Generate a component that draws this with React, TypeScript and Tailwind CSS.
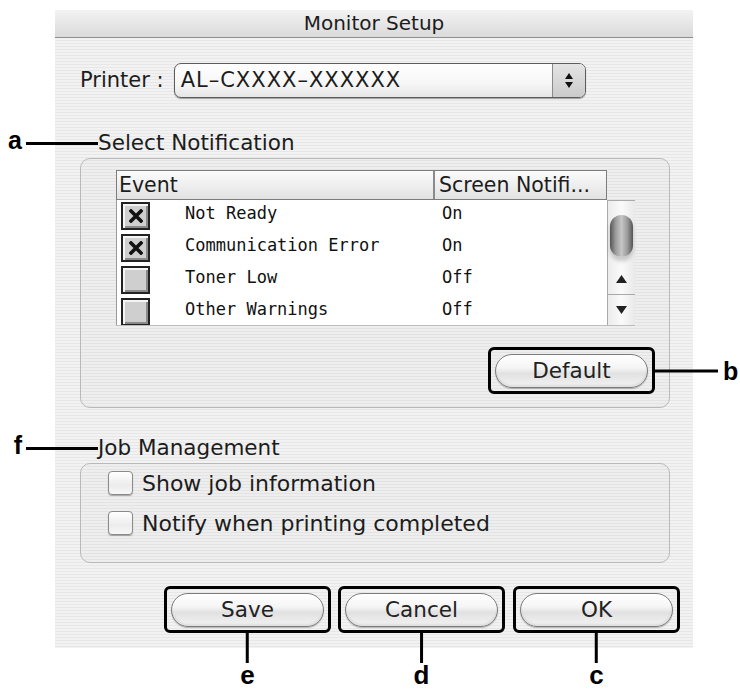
const stripes =
  'bg-[repeating-linear-gradient(180deg,#f2f2f2_0px,#f2f2f2_2px,#e7e7e7_2px,#e7e7e7_3px)]'

const events = [
  { name: 'Not Ready', on: true },
  { name: 'Communication Error', on: true },
  { name: 'Toner Low', on: false },
  { name: 'Other Warnings', on: false },
]

function Letter({ children }: { children: string }) {
  return (
    <span className="font-['Liberation_Sans',sans-serif] font-bold text-[25px] leading-[25px] text-black">
      {children}
    </span>
  )
}

function LeftTag({ letter }: { letter: string }) {
  return (
    <div className="absolute right-full top-0 h-full flex items-center gap-[4px]">
      <span className="relative -top-[2px]">
        <Letter>{letter}</Letter>
      </span>
      <div className="w-[72px] h-[3px] bg-black" />
    </div>
  )
}

function BottomTag({ letter }: { letter: string }) {
  return (
    <div className="absolute top-full left-1/2 -translate-x-1/2 flex flex-col items-center">
      <div className="w-[3px] h-[33px] bg-black" />
      <span className="font-['Liberation_Sans',sans-serif] font-bold text-[26px] leading-[24px] text-black">
        {letter}
      </span>
    </div>
  )
}

function AquaButton({ label }: { label: string }) {
  return (
    <div className="h-full rounded-full border border-[#7b7b7b] bg-[linear-gradient(180deg,#ffffff_0%,#f5f5f5_40%,#e1e1e1_58%,#f3f3f3_100%)] shadow-[inset_0_1px_0_#fff,inset_0_-2px_2px_rgba(0,0,0,0.08),0_1px_1px_rgba(0,0,0,0.25)] flex items-center justify-center text-[21.5px] text-[#222]">
      {label}
    </div>
  )
}

function Frame({ label, className, children }: { label: string; className: string; children?: React.ReactNode }) {
  return (
    <div className={`relative h-[47px] rounded-[6px] border-[3px] border-black px-[4px] pt-[4px] pb-[3px] ${className}`}>
      <AquaButton label={label} />
      {children}
    </div>
  )
}

function OldCheck({ on }: { on: boolean }) {
  return (
    <div className="w-[29px] h-[28px] border-2 border-[#222] bg-[#cfcfcf] shadow-[inset_2px_2px_0_#f4f4f4,inset_-2px_-2px_0_#8a8a8a] flex items-center justify-center">
      {on && (
        <svg width="14" height="14" viewBox="0 0 14 14">
          <path d="M2 2 L12 12 M12 2 L2 12" stroke="#111" strokeWidth="3.6" strokeLinecap="square" />
        </svg>
      )}
    </div>
  )
}

function AquaCheck() {
  return (
    <div className="w-[25px] h-[24px] rounded-[4px] border border-[#8a8a8a] bg-[linear-gradient(180deg,#ffffff,#ececec_60%,#f7f7f7)] shadow-[0_1px_1px_rgba(0,0,0,0.3)]" />
  )
}

export default function App() {
  return (
    <div className="w-[740px] h-[692px] bg-white overflow-hidden">
      <div className="relative ml-[55px] mt-[10px] w-[638px] h-[638px] flex flex-col font-['DejaVu_Sans',sans-serif] text-[#1c1c1c]">
        {/* title bar */}
        <div className="h-[28px] shrink-0 bg-[linear-gradient(180deg,#f3f3f3,#dadada)] border-b border-[#8e8e8e] text-center text-[20px] leading-[27px]">
          Monitor Setup
        </div>

        <div className={`flex-1 ${stripes} pl-[25px] pt-[25px]`}>
          {/* printer */}
          <div className="flex items-center h-[35px]">
            <span className="text-[21px]">Printer :</span>
            <div className="ml-[10px] w-[412px] h-[35px] rounded-[7px] border border-[#5c5c5c] bg-[linear-gradient(180deg,#ffffff,#f6f6f6_60%,#e6e6e6)] shadow-[0_1px_1px_rgba(0,0,0,0.35)] flex overflow-hidden">
              <div className="flex-1 pl-[6px] flex items-center text-[21px] tracking-[1px]">AL–CXXXX–XXXXXX</div>
              <div className="w-[33px] border-l border-[#8a8a8a] bg-[linear-gradient(180deg,#e4e4e4,#cbcbcb)] flex flex-col items-center justify-center gap-[3px]">
                <svg width="8" height="6" viewBox="0 0 8 6"><path d="M4 0 L8 6 L0 6 Z" fill="#111" /></svg>
                <svg width="8" height="6" viewBox="0 0 8 6"><path d="M0 0 L8 0 L4 6 Z" fill="#111" /></svg>
              </div>
            </div>
          </div>

          {/* select notification */}
          <div className="relative ml-[18px] mt-[33px] h-[24px] w-fit text-[21.5px] leading-[24px]">
            Select Notification
            <LeftTag letter="a" />
          </div>
          <div className="mt-[3px] w-[590px] h-[250px] rounded-[10px] border border-[#b9b9b9] bg-black/[0.015] pl-[35px] pt-[11px]">
            <div className="w-[519px]">
              <div className="flex w-[491px] h-[30px] border border-[#7d7d7d] bg-[linear-gradient(180deg,#fbfbfb,#ececec_60%,#e2e2e2)] text-[20.5px] leading-[28px]">
                <div className="w-[316px] pl-[2px]">Event</div>
                <div className="flex-1 border-l-2 border-[#8a8a8a] pl-[4px] whitespace-nowrap overflow-hidden">Screen Notifi...</div>
              </div>
              <div className="flex h-[126px] border-b border-[#bdbdbd]">
                <div className="w-[491px] bg-white border-l border-[#9a9a9a] overflow-hidden font-['DejaVu_Sans_Mono',monospace] text-[17px] text-[#111]">
                  {events.map((ev) => (
                    <div key={ev.name} className="flex items-center h-[32px] shrink-0">
                      <div className="w-[68px] pl-[4px]">
                        <OldCheck on={ev.on} />
                      </div>
                      <div className="w-[248px] pb-[4px]">{ev.name}</div>
                      <div className="pl-[9px] pb-[4px]">{ev.on ? 'On' : 'Off'}</div>
                    </div>
                  ))}
                </div>
                {/* scrollbar */}
                <div className="w-[28px] border-l border-t border-[#a9a9a9] bg-[linear-gradient(90deg,#ececec,#fafafa_50%,#e9e9e9)] flex flex-col">
                  <div className="h-[62px] pt-[14px] px-[2px]">
                    <div className="h-[42px] rounded-full bg-[linear-gradient(90deg,#555,#9c9c9c_25%,#c6c6c6_50%,#9c9c9c_75%,#555)] shadow-[0_4px_4px_rgba(0,0,0,0.2)]" />
                  </div>
                  <div className="h-[31px] flex items-center justify-center">
                    <svg width="11" height="8" viewBox="0 0 11 8"><path d="M5.5 0 L11 8 L0 8 Z" fill="#222" /></svg>
                  </div>
                  <div className="flex-1 border-t border-[#a9a9a9] flex items-center justify-center">
                    <svg width="11" height="8" viewBox="0 0 11 8"><path d="M0 0 L11 0 L5.5 8 Z" fill="#222" /></svg>
                  </div>
                </div>
              </div>
            </div>
            <div className="flex justify-end pr-[14px] mt-[21px]">
              <Frame label="Default" className="w-[167px]">
                <div className="absolute left-full top-1/2 -translate-y-1/2 flex items-center gap-[5px]">
                  <div className="w-[66px] h-[3px] bg-black" />
                  <Letter>b</Letter>
                </div>
              </Frame>
            </div>
          </div>

          {/* job management */}
          <div className="relative ml-[18px] mt-[28px] h-[24px] w-fit text-[21.5px] leading-[24px]">
            Job Management
            <LeftTag letter="f" />
          </div>
          <div className="mt-[3px] w-[590px] h-[100px] rounded-[10px] border border-[#b9b9b9] bg-black/[0.015] pl-[27px] pt-[6px] flex flex-col gap-[14px] text-[22px]">
            <div className="flex items-center gap-[9px] h-[26px]">
              <AquaCheck />
              <span>Show job information</span>
            </div>
            <div className="flex items-center gap-[9px] h-[26px]">
              <AquaCheck />
              <span>Notify when printing completed</span>
            </div>
          </div>

          {/* buttons */}
          <div className="ml-[84px] mt-[23px] flex gap-[7px]">
            <Frame label="Save" className="w-[167px]">
              <BottomTag letter="e" />
            </Frame>
            <Frame label="Cancel" className="w-[167px]">
              <BottomTag letter="d" />
            </Frame>
            <Frame label="OK" className="w-[167px] ml-[1px]">
              <BottomTag letter="c" />
            </Frame>
          </div>
        </div>
      </div>
    </div>
  )
}
